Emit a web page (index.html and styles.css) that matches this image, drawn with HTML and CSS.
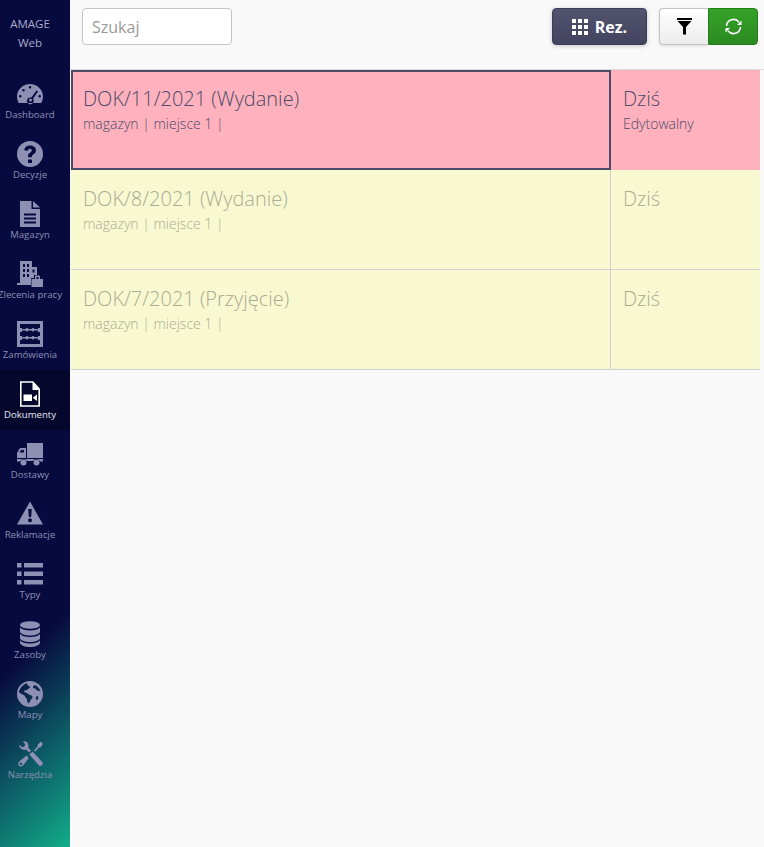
FILE: index.html

```html
<!DOCTYPE html>
<html lang="en">
<head>
    <meta charset="UTF-8">
    <meta name="viewport" content="width=device-width, initial-scale=1.0">
    <title>AMAGE Web - Dokumenty</title>
    <link rel="stylesheet" href="styles.css">
</head>
<body>
    <div class="sidebar">
        <div class="brand">AMAGE<br>Web</div>

        <a class="nav-item">
            <svg class="nav-icon" viewBox="0 0 26 24"><path fill-rule="evenodd" d="M13 2C6 2 0 7.500 0 14.500c0 2.500.7 4.500 1.800 6.500h22.400c1.100-2 1.800-4 1.800-6.500C26 7.500 20 2 13 2zM13 4a1.300 1.300 0 1 1 0 2.600A1.300 1.300 0 0 1 13 4zM6.500 7a1.300 1.300 0 1 1 0 2.600 1.300 1.300 0 0 1 0-2.600zM3.300 13a1.300 1.300 0 1 1 0 2.600 1.300 1.300 0 0 1 0-2.600zM19.500 8.500l1.500 1-5 7.200a3.400 3.400 0 1 1-1.600-1.100zM22.700 13a1.300 1.300 0 1 1 0 2.600 1.300 1.300 0 0 1 0-2.600zM13.500 16.500a1.500 1.500 0 1 0 0 3 1.500 1.500 0 0 0 0-3z"/></svg>
            <span>Dashboard</span>
        </a>
        <a class="nav-item">
            <svg class="nav-icon" viewBox="0 0 26 26"><path fill-rule="evenodd" d="M13 0a13 13 0 1 1 0 26 13 13 0 0 1 0-26zM11 18.500v3.500h4v-3.500zM13 4.500c-3.300 0-5.500 1.800-5.800 4.800l3.600.5c.2-1.400 1-2.100 2.100-2.100 1.100 0 1.900.7 1.900 1.700 0 .9-.5 1.400-1.500 2.100-1.500 1-2.300 2-2.300 3.800v1h3.800v-.7c0-.9.4-1.300 1.400-2 1.500-1 2.700-2.200 2.700-4.400 0-2.900-2.500-4.700-5.900-4.700z"/></svg>
            <span>Decyzje</span>
        </a>
        <a class="nav-item">
            <svg class="nav-icon" viewBox="0 0 26 26"><path fill-rule="evenodd" d="M3 0h11.500v8H23v18H3zM16 0l7 6.500h-7zM7 12.500v2h12v-2zM7 16.500v2h12v-2zM7 20.500v2h12v-2z"/></svg>
            <span>Magazyn</span>
        </a>
        <a class="nav-item">
            <svg class="nav-icon" viewBox="0 0 26 26"><path fill-rule="evenodd" d="M3 0h12v6h5v8h-3v3h-3v7H0v-2h3zM6 3v3h2V3zM10 3v3h2V3zM6 8v3h2V8zM10 8v3h2V8zM6 13v3h2v-3zM10 13v3h2v-3zM15.500 8.500v3h2v-3z"/><path fill-rule="evenodd" d="M14.500 18h3.500v-2.500a1 1 0 0 1 1-1h3a1 1 0 0 1 1 1V18h3v8H14.500zM19.500 16v2h2v-2z"/></svg>
            <span>Zlecenia pracy</span>
        </a>
        <a class="nav-item">
            <svg class="nav-icon" viewBox="0 0 26 26"><path fill-rule="evenodd" d="M0 0h26v26H0zM3 3v20h20V3zM3 7h2v1h3.500a1.700 1.700 0 0 1 3 0h3a1.700 1.700 0 0 1 3 0H21V7h2v4h-2v-1.500h-3.500a1.700 1.700 0 0 1-3 0h-3a1.700 1.700 0 0 1-3 0H5V11H3zM3 15h2v1h3.500a1.700 1.700 0 0 1 3 0h3a1.700 1.700 0 0 1 3 0H21v-1h2v4h-2v-1.500h-3.500a1.700 1.700 0 0 1-3 0h-3a1.700 1.700 0 0 1-3 0H5V19H3z"/></svg>
            <span>Zamówienia</span>
        </a>
        <a class="nav-item active">
            <svg class="nav-icon" viewBox="0 0 26 26"><path fill="#05082c" stroke="#fff" stroke-width="1.600" d="M3.800 1h12l6.400 7v17H3.800z"/><path fill="#fff" d="M15.500 1h1l5.500 6.500V9h-6.500zM6.500 13.500h8.500v6.500H6.500zM16 16.500l4-3v6.500l-4-3z"/></svg>
            <span>Dokumenty</span>
        </a>
        <a class="nav-item">
            <svg class="nav-icon" viewBox="0 0 26 26"><path fill-rule="evenodd" d="M10 2h16v15H10zM0 12l3-5h6v10H0zM2.500 11.500H7V9H4zM0 18h26v2.500h-3a3.800 3.800 0 0 0-7-.5h-6a3.800 3.800 0 0 0-7 .5H0z"/><circle cx="6.500" cy="21.500" r="3"/><circle cx="19.500" cy="21.500" r="3"/></svg>
            <span>Dostawy</span>
        </a>
        <a class="nav-item">
            <svg class="nav-icon" viewBox="0 0 26 26"><path fill-rule="evenodd" d="M13 .5l13 23H0zM11.300 8l.5 8h2.400l.5-8zM13 17.300a2 2 0 1 0 0 4 2 2 0 0 0 0-4z"/></svg>
            <span>Reklamacje</span>
        </a>
        <a class="nav-item">
            <svg class="nav-icon" viewBox="0 0 26 26"><path d="M0 2h4.500v4.500H0zM7 2h19v4.500H7zM0 10.500h4.500V15H0zM7 10.500h19V15H7zM0 19h4.500v4.500H0zM7 19h19v4.500H7z"/></svg>
            <span>Typy</span>
        </a>
        <a class="nav-item">
            <svg class="nav-icon" viewBox="0 0 26 26"><ellipse cx="13" cy="4" rx="10" ry="3.800"/><path d="M3 6.500c1.500 2 5.500 3 10 3s8.500-1 10-3V11c-1 2-5 3.500-10 3.500S4 13 3 11zM3 13c1.500 2 5.500 3 10 3s8.500-1 10-3v4.500c-1 2-5 3.500-10 3.500s-9-1.500-10-3.500zM3 19.500c1.500 2 5.500 3 10 3s8.500-1 10-3V22c-1 2.500-5 4-10 4s-9-1.500-10-4z"/></svg>
            <span>Zasoby</span>
        </a>
        <a class="nav-item">
            <svg class="nav-icon" viewBox="0 0 26 26"><path fill-rule="evenodd" d="M13 0a13 13 0 1 1 0 26 13 13 0 0 1 0-26zM9 2.500C5.500 4 2.500 7.500 2 11.500c1 .2 1.500 1 2.500 1.500 1.500.5 3 1 3.500 2.500.5 1.500 2 1.500 2 3.500 0 1 .5 2.500 1.500 3.500.8-1 1.500-2 2-3 .5-1.500 2-2 2-3.500 0-1.500-2-2-3.500-2.500-1.500-.5-2-2-3.500-2-1 0-1.500-1-1-2 1-.5 2 0 2.500-.5 1-1.500 3-1.500 3-3 0-1-2-1-2.500-2 0-.8-.5-1.500-1-2zM18 4c-1 .5-2 1-2 2s1 1.500 2 1.500 1 1.500 2 2 2-.5 3.500 1C23 8 21 5.500 18 4zM20 15c-1 .5-1.500 2-1 3.500.5 1 1.500.5 2-.5s.5-3.500-1-3z"/></svg>
            <span>Mapy</span>
        </a>
        <a class="nav-item">
            <svg class="nav-icon" viewBox="0 0 26 26"><path fill-rule="evenodd" d="M6 .5c2.800-.8 5.500 1.300 5.500 4.200 0 .8-.1 1.400-.4 2L14 9.600l-1.900 2-2.900-3c-3 1-6.700-1-7.200-4.600l3.700 2.300 2.400-1.500L8 3zM24 .5L26 3l-2.300 3.200-2 .5-3.500 4-1.300-1.300 3.600-4 .3-2zM15.500 10.500l9.500 10.300c1 1.100 1 2.600 0 3.400-1 1-2.300.8-3.200 0l-9.500-10.600zM9.500 14.500L11.800 17l-5.500 7.300c-1.200 1.400-3.200 1.500-4.300.4-1.200-1.200-1-3 .3-4.200zM4 21.500a1.300 1.300 0 1 0 0 2.600 1.300 1.300 0 0 0 0-2.600z"/></svg>
            <span>Narzędzia</span>
        </a>
    </div>

    <div class="main">
        <div class="topbar">
            <input class="search" type="text" placeholder="Szukaj">
            <button class="btn-rez">
                <svg class="grid-icon" viewBox="0 0 16 16"><path d="M0 0h4v4H0zM6 0h4v4H6zM12 0h4v4h-4zM0 6h4v4H0zM6 6h4v4H6zM12 6h4v4h-4zM0 12h4v4H0zM6 12h4v4H6zM12 12h4v4h-4z"/></svg>
                Rez.
            </button>
            <div class="btn-group">
                <button class="btn-filter">
                    <svg class="small-icon" viewBox="0 0 17 17"><path d="M1 0h15v2H1zM1.500 3h14L10 9v7.500H7V9z"/></svg>
                </button>
                <button class="btn-refresh">
                    <svg class="small-icon" viewBox="0 0 17 17"><path fill="none" stroke="#fff" stroke-width="1.600" d="M1.500 8a7 7 0 0 1 12.500-3.800M15.500 9a7 7 0 0 1-12.500 3.800"/><path fill="#fff" d="M16.500 2.500v4.500h-4.500zM.5 14.500V10H5z"/></svg>
                </button>
            </div>
        </div>

        <div class="doc-list">
            <div class="doc-row red selected">
                <div class="doc-main">
                    <div class="doc-title">DOK/11/2021 (Wydanie)</div>
                    <div class="doc-sub">magazyn | miejsce 1 |</div>
                </div>
                <div class="doc-side">
                    <div class="doc-title">Dziś</div>
                    <div class="doc-sub">Edytowalny</div>
                </div>
            </div>
            <div class="doc-row yellow">
                <div class="doc-main">
                    <div class="doc-title">DOK/8/2021 (Wydanie)</div>
                    <div class="doc-sub">magazyn | miejsce 1 |</div>
                </div>
                <div class="doc-side">
                    <div class="doc-title">Dziś</div>
                </div>
            </div>
            <div class="doc-row yellow">
                <div class="doc-main">
                    <div class="doc-title">DOK/7/2021 (Przyjęcie)</div>
                    <div class="doc-sub">magazyn | miejsce 1 |</div>
                </div>
                <div class="doc-side">
                    <div class="doc-title">Dziś</div>
                </div>
            </div>
        </div>
    </div>
</body>
</html>
```

FILE: styles.css

```css
* {
    margin: 0;
    padding: 0;
    box-sizing: border-box;
}

html, body {
    height: 100%;
    overflow: hidden;
}

body {
    font-family: 'Open Sans', sans-serif;
    background: #f9f9f9;
    display: flex;
}

.sidebar {
    width: 70px;
    flex: none;
    height: 847px;
    background: linear-gradient(135deg, #070a3f 0%, #070a3f 74%, #12ad8a 100%);
    overflow: hidden;
}

.brand {
    width: 60px;
    height: 70px;
    padding-top: 14px;
    text-align: center;
    color: #a9abc8;
    font-size: 11.5px;
    line-height: 19px;
}

.nav-item {
    display: flex;
    flex-direction: column;
    align-items: center;
    height: 60px;
    padding: 11px 10px 0 0;
    color: #8d8fb3;
}

.nav-item span {
    font-size: 9.6px;
    line-height: 14px;
    margin-top: 1px;
    white-space: nowrap;
}

.nav-item.active {
    background: #05082c;
    color: #e8e9f2;
}

.nav-icon {
    width: 26px;
    height: 26px;
    fill: #8d8fb3;
    display: block;
}

.nav-item.active .nav-icon {
    fill: #fff;
}

.main {
    flex: 1;
    min-width: 0;
}

.topbar {
    height: 70px;
    display: flex;
    align-items: flex-start;
    padding: 8px 6px 0 12px;
    border-bottom: 1px solid #dcdcdc;
}

.search {
    width: 150px;
    height: 37px;
    padding: 0 9px;
    border: 1px solid #c4c4c4;
    border-radius: 4px;
    background: #fff;
    font-family: 'Open Sans', sans-serif;
    font-size: 16px;
    color: #555;
}

.search::placeholder {
    color: #999;
}

.btn-rez {
    margin-left: auto;
    width: 95px;
    height: 37px;
    display: flex;
    align-items: center;
    justify-content: center;
    gap: 7px;
    border: 1px solid #3c3d58;
    border-radius: 4px;
    background: linear-gradient(#52536f, #43445f);
    box-shadow: 0 1px 4px rgba(0, 0, 0, 0.2);
    color: #fff;
    font-family: 'Open Sans', sans-serif;
    font-size: 16px;
    font-weight: 700;
}

.grid-icon {
    width: 16px;
    height: 16px;
    fill: #fff;
}

.btn-group {
    display: flex;
    margin-left: 12px;
}

.btn-filter, .btn-refresh {
    width: 49px;
    height: 37px;
    display: flex;
    align-items: center;
    justify-content: center;
}

.btn-filter {
    border: 1px solid #c4c4c4;
    border-right: none;
    border-radius: 4px 0 0 4px;
    background: linear-gradient(#fff, #ececec);
    box-shadow: 0 1px 3px rgba(0, 0, 0, 0.12);
}

.btn-filter .small-icon {
    fill: #000;
}

.btn-refresh {
    width: 50px;
    border: 1px solid #237f1a;
    border-radius: 0 4px 4px 0;
    background: linear-gradient(#36a229, #2a8a20);
}

.small-icon {
    width: 17px;
    height: 17px;
}

.doc-list {
    width: 689px;
    margin-left: 1px;
}

.doc-row {
    display: flex;
    height: 100px;
    border-bottom: 1px solid #d0d0d0;
}

.doc-row.red {
    background: #ffb1bd;
}

.doc-row.yellow {
    background: #f9f9d1;
}

.doc-main {
    width: 540px;
    padding: 15px 12px 0;
    border-right: 1px solid #d0d0d0;
}

.doc-side {
    flex: 1;
    padding: 15px 12px 0;
}

.selected .doc-main {
    height: 100px;
    padding: 13px 10px 0;
    border: 2px solid #4a4b68;
}

.selected .doc-side {
    height: 99px;
}

.selected {
    border-bottom: none;
}

.doc-title {
    font-size: 20px;
    font-weight: 300;
    line-height: 27px;
    color: #4a4b68;
}

.doc-sub {
    font-size: 14px;
    font-weight: 300;
    line-height: 23px;
    color: #4a4b68;
}

.yellow .doc-title, .yellow .doc-sub {
    color: #a9aa94;
}
```
